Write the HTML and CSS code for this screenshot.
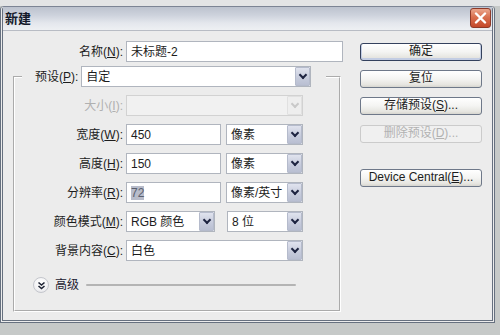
FILE: index.html
```html
<!DOCTYPE html>
<html lang="zh-CN">
<head>
<meta charset="utf-8">
<title>新建</title>
<link rel="stylesheet" href="styles.css">
</head>
<body>
<div class="window">
  <div class="titlebar">
    <span class="title">新建</span>
    <span class="close"><svg width="13" height="12" viewBox="0 0 13 12"><path d="M2 1.5l9 9M11 1.5l-9 9" stroke="#fff" stroke-width="2.4" stroke-linecap="round"/></svg></span>
  </div>
  <div class="content">
    <div class="left">
      <div class="row name-row"><span class="lbl lbl-name">名称(<u>N</u>):</span><div class="field input w-name">未标题-2</div></div>
      <fieldset class="group">
        <legend class="legend"><span class="lbl-legend">预设(<u>P</u>):</span><div class="field select w-preset"><span class="val">自定</span><span class="arrow"></span></div></legend>
        <div class="row"><span class="lbl off">大小(<u>I</u>):</span><div class="field select off w-full"><span class="val"></span><span class="arrow"></span></div></div>
        <div class="row"><span class="lbl">宽度(<u>W</u>):</span><div class="field input w-num">450</div><div class="field select w-unit"><span class="val">像素</span><span class="arrow"></span></div></div>
        <div class="row"><span class="lbl">高度(<u>H</u>):</span><div class="field input w-num">150</div><div class="field select w-unit"><span class="val">像素</span><span class="arrow"></span></div></div>
        <div class="row"><span class="lbl">分辨率(<u>R</u>):</span><div class="field input w-num"><span class="sel">72</span></div><div class="field select w-unit"><span class="val">像素/英寸</span><span class="arrow"></span></div></div>
        <div class="row"><span class="lbl">颜色模式(<u>M</u>):</span><div class="field select w-mode"><span class="val">RGB 颜色</span><span class="arrow"></span></div><div class="field select w-bits"><span class="val">8 位</span><span class="arrow"></span></div></div>
        <div class="row"><span class="lbl">背景内容(<u>C</u>):</span><div class="field select w-full"><span class="val">白色</span><span class="arrow"></span></div></div>
        <div class="advanced">
          <span class="adv-icon"><svg width="9" height="9" viewBox="0 0 9 9"><path d="M1.5 1.5l3 2.5 3-2.5M1.5 5l3 2.5 3-2.5" fill="none" stroke="#1d2233" stroke-width="1.6"/></svg></span>
          <span class="adv-text">高级</span>
          <span class="adv-line"></span>
        </div>
      </fieldset>
    </div>
    <div class="buttons">
      <div class="btn default">确定</div>
      <div class="btn b2">复位</div>
      <div class="btn b3">存储预设(<u>S</u>)...</div>
      <div class="btn off b4">删除预设(<u>D</u>)...</div>
      <div class="btn">Device Central(<u>E</u>)...</div>
    </div>
  </div>
</div>
</body>
</html>
```

FILE: styles.css
```css
html, body {
  margin: 0;
  padding: 0;
}
body {
  width: 500px;
  height: 335px;
  overflow: hidden;
  background: linear-gradient(to bottom, #e3e4e5 0, #e3e4e5 6px, #c6c9c8 6px);
  font-family: "Liberation Sans", "Noto Sans CJK SC", sans-serif;
  font-size: 12px;
  color: #1c1c1c;
}
u {
  text-decoration: underline;
  text-underline-offset: 1px;
}
.window {
  box-sizing: border-box;
  margin-top: 6px;
  width: 495px;
  height: 317px;
  background: #ececec;
  border: 3px double #66707f;
  border-top: 1px solid #7c8494;
  border-radius: 4px 4px 0 0;
  display: flex;
  flex-direction: column;
}
.titlebar {
  height: 23px;
  flex: none;
  display: flex;
  justify-content: space-between;
  align-items: flex-start;
  background: linear-gradient(to bottom, #bcc2ce 0%, #cdd2dc 35%, #e4e7ed 70%, #eef0f3 100%);
  border-bottom: 1px solid #b8bcc4;
}
.title {
  padding-left: 2px;
  margin-top: 4px;
  font-family: "Noto Sans CJK SC", sans-serif;
  font-weight: bold;
  font-size: 13px;
  line-height: 14px;
  color: #151a2a;
}
.close {
  box-sizing: border-box;
  width: 21px;
  height: 20px;
  margin-top: 1px;
  margin-right: 1px;
  border: 1px solid #8e3a28;
  border-radius: 3px;
  background: linear-gradient(to bottom, #eaa58c 0%, #d9704f 45%, #c4482a 100%);
  display: flex;
  align-items: center;
  justify-content: center;
}
.content {
  display: flex;
  padding: 10px 0 0 10px;
  gap: 17px;
}
.left {
  width: 330px;
  display: flex;
  flex-direction: column;
}
.row {
  display: flex;
  align-items: center;
  height: 21px;
  margin-bottom: 8px;
}
.name-row {
  margin-bottom: 4px;
}
.lbl {
  width: 108px;
  margin-right: 3px;
  text-align: right;
  white-space: nowrap;
  line-height: 14px;
}
.lbl-name {
  width: 110px;
}
.lbl.off {
  color: #b0b0b0;
}
.field {
  box-sizing: border-box;
  height: 21px;
  border: 1px solid #b0b5be;
  background: #fff;
  display: flex;
  align-items: center;
  padding-left: 4px;
  white-space: nowrap;
  line-height: 14px;
}
.select {
  padding-right: 0;
}
.select .val {
  flex: 1;
}
.arrow {
  box-sizing: border-box;
  width: 15px;
  height: 19px;
  flex: none;
  border: 1px solid #b5bbcc;
  border-radius: 1px;
  background: linear-gradient(to bottom, #e0e3ee 0%, #c5cadb 60%, #b9bfd2 100%);
  display: flex;
  align-items: center;
  justify-content: center;
}
.arrow::after {
  content: "";
  width: 4px;
  height: 4px;
  border-right: 2px solid #1d2340;
  border-bottom: 2px solid #1d2340;
  transform: rotate(45deg);
  margin-top: -4px;
}
.select.off {
  background: #f1f1f1;
  border-color: #d2d2d2;
}
.select.off .arrow {
  background: #eeeeee;
  border-color: #e0e0e0;
}
.select.off .arrow::after {
  border-color: #c9c9c9;
}
.sel {
  background: #b8bcca;
  color: #5a5f6e;
}
.w-name { width: 217px; }
.w-preset { width: 230px; }
.w-full { width: 177px; }
.w-num { width: 95px; }
.w-unit { width: 77px; margin-left: 5px; }
.w-mode { width: 89px; }
.w-bits { width: 76px; margin-left: 12px; }

.group {
  margin: 0;
  width: 328px;
  box-sizing: border-box;
  padding: 8px 0 17px 0;
  border: 2px groove #ffffff;
  min-width: 0;
}
.legend {
  margin-left: 7px;
  padding: 0 15px 0 13px;
  display: flex;
  align-items: center;
}
.lbl-legend {
  margin-right: 3px;
  white-space: nowrap;
  line-height: 14px;
}
.advanced {
  display: flex;
  align-items: center;
  height: 16px;
  margin-top: 16px;
  padding-left: 18px;
}
.adv-icon {
  box-sizing: border-box;
  width: 16px;
  height: 16px;
  border-radius: 50%;
  border: 1px solid #c4c6cc;
  background: radial-gradient(circle at 50% 35%, #ffffff 0%, #f2f2f4 60%, #dcdde2 100%);
  display: flex;
  align-items: center;
  justify-content: center;
}
.adv-text {
  margin-left: 6px;
  line-height: 14px;
  color: #1c2030;
}
.adv-line {
  margin-left: 7px;
  width: 210px;
  height: 2px;
  border-radius: 1px;
  background: #b4b4b4;
}
.buttons {
  width: 122px;
  padding-top: 2px;
  display: flex;
  flex-direction: column;
}
.btn {
  box-sizing: border-box;
  height: 18px;
  border: 1px solid #6e7889;
  border-radius: 3px;
  background: linear-gradient(to bottom, #ffffff 0%, #f4f4f2 50%, #e6e5e0 85%, #d6d5cf 100%);
  text-align: center;
  line-height: 15px;
  white-space: nowrap;
  margin-bottom: 9px;
  color: #1c1c1c;
}
.btn.default {
  border-color: #34415d;
  box-shadow: inset 0 -1px 0 1px #c3cde3;
}
.btn.b3 {
  margin-bottom: 10px;
}
.btn.b4 {
  margin-bottom: 26px;
}
.btn.off {
  border-color: #cbcbcb;
  color: #b2b2b2;
  background: #f0f0f0;
}
```
